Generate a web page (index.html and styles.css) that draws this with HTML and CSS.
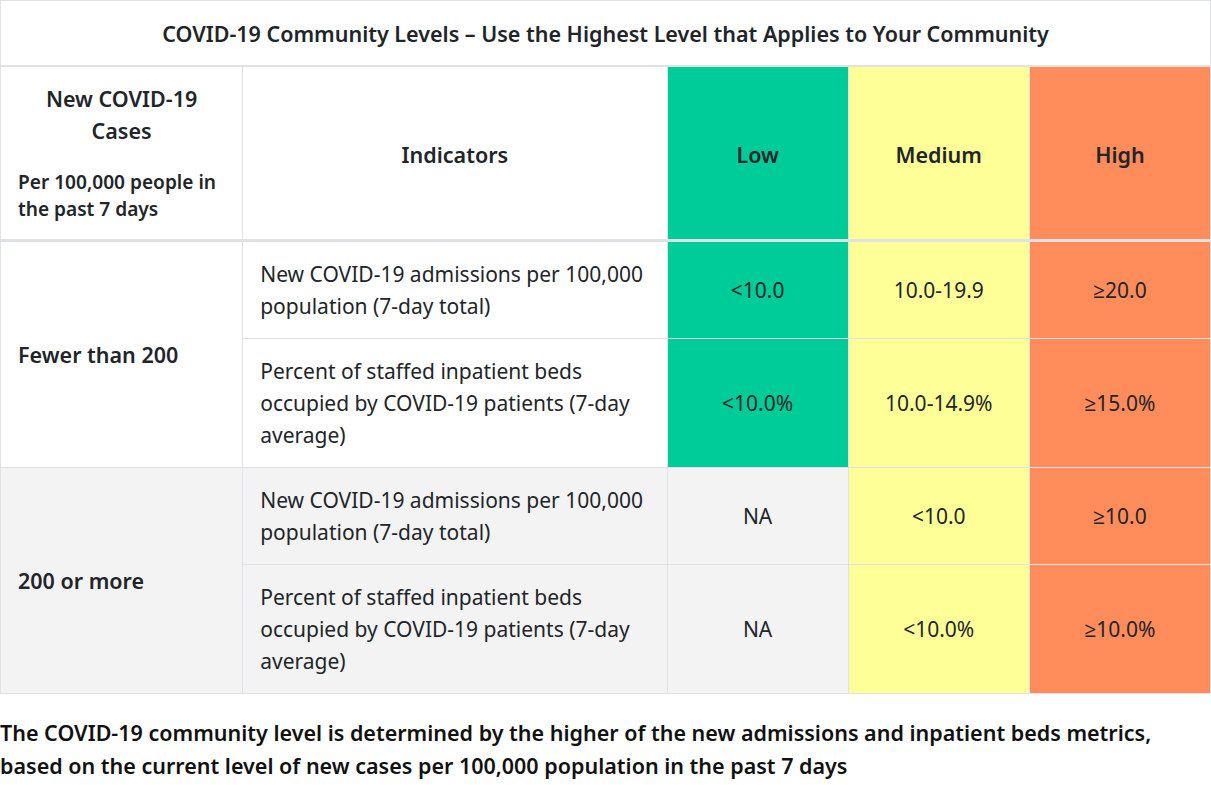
FILE: index.html
```html
<!DOCTYPE html>
<html lang="en">
<head>
<meta charset="utf-8">
<title>COVID-19 Community Levels</title>
<link rel="stylesheet" href="styles.css">
</head>
<body>
<table class="levels">
  <colgroup>
    <col class="c-cases">
    <col class="c-ind">
    <col class="c-lvl">
    <col class="c-lvl">
    <col class="c-lvl">
  </colgroup>
  <thead>
    <tr class="title-row">
      <th colspan="5">COVID-19 Community Levels – Use the Highest Level that Applies to Your Community</th>
    </tr>
    <tr class="head-row">
      <th class="cases-head">
        <div class="cases-title">New COVID-19 Cases</div>
        <div class="cases-sub">Per 100,000 people in the past 7 days</div>
      </th>
      <th class="center">Indicators</th>
      <th class="center low">Low</th>
      <th class="center med">Medium</th>
      <th class="center high">High</th>
    </tr>
  </thead>
  <tbody>
    <tr>
      <th rowspan="2" class="group">Fewer than 200</th>
      <td>New COVID-19 admissions per 100,000 population (7-day total)</td>
      <td class="center low">&lt;10.0</td>
      <td class="center med">10.0-19.9</td>
      <td class="center high">≥20.0</td>
    </tr>
    <tr>
      <td>Percent of staffed inpatient beds occupied by COVID-19 patients (7-day average)</td>
      <td class="center low">&lt;10.0%</td>
      <td class="center med">10.0-14.9%</td>
      <td class="center high">≥15.0%</td>
    </tr>
    <tr class="alt">
      <th rowspan="2" class="group">200 or more</th>
      <td>New COVID-19 admissions per 100,000 population (7-day total)</td>
      <td class="center">NA</td>
      <td class="center med">&lt;10.0</td>
      <td class="center high">≥10.0</td>
    </tr>
    <tr class="alt">
      <td>Percent of staffed inpatient beds occupied by COVID-19 patients (7-day average)</td>
      <td class="center">NA</td>
      <td class="center med">&lt;10.0%</td>
      <td class="center high">≥10.0%</td>
    </tr>
  </tbody>
</table>
<p class="note">The COVID-19 community level is determined by the higher of the new admissions and inpatient beds metrics, based on the current level of new cases per 100,000 population in the past 7 days</p>
</body>
</html>
```

FILE: styles.css
```css
html, body {
  margin: 0;
  padding: 0;
  background: #fff;
}
body {
  font-family: "Noto Sans", "Open Sans", sans-serif;
  font-size: 21px;
  line-height: 32px;
  color: #212529;
}
.levels {
  width: 1211px;
  border-collapse: collapse;
  table-layout: fixed;
}
.c-cases { width: 242px; }
.c-ind { width: 424px; }
.c-lvl { width: 181px; }
.levels th,
.levels td {
  border: 1px solid #dee2e6;
  padding: 16px 17px;
  vertical-align: middle;
  text-align: left;
  font-weight: 400;
}
.levels th {
  font-weight: 600;
  font-size: 21.5px;
}
.title-row th {
  text-align: center;
  padding-top: 17px;
  padding-bottom: 15px;
  border-bottom: 2px solid #dee2e6;
}
.head-row th {
  border-bottom: 3px solid #dee2e6;
}
.head-row th.center {
  padding-top: 18px;
  padding-bottom: 14px;
}
.center {
  text-align: center !important;
}
.cases-title {
  text-align: center;
  padding: 0 10px;
}
.cases-sub {
  margin-top: 22px;
  font-size: 19.1px;
  line-height: 27px;
  font-weight: 600;
}
.alt th,
.alt td {
  background: #f3f3f3;
}
.levels .low { background: #00cc99; }
.levels .med { background: #ffff98; }
.levels .high { background: #ff8c5a; }
.note {
  margin: 22px 0 0;
  font-size: 21.5px;
  font-weight: 600;
  line-height: 33px;
  color: #111;
}
```
